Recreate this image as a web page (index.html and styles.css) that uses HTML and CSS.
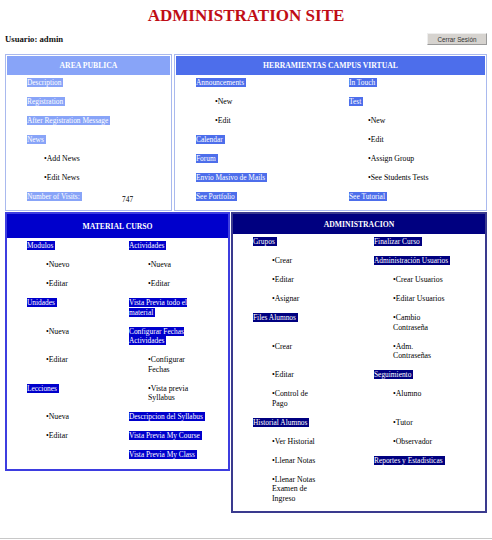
FILE: index.html
```html
<!DOCTYPE html>
<html>
<head>
<meta charset="utf-8">
<title>Administration Site</title>
<link rel="stylesheet" href="styles.css">
</head>
<body>
<div class="page">
  <h1 class="title">ADMINISTRATION SITE</h1>
  <div class="userbar">
    <span class="user">Usuario: admin</span>
    <button class="logout" type="button">Cerrar Sesión</button>
  </div>

  <div class="row top">
    <section class="box pub">
      <div class="head">AREA PUBLICA</div>
      <div class="body">
        <div class="cell"><span class="lbl">Description</span></div>
        <div class="cell"><span class="lbl">Registration</span></div>
        <div class="cell"><span class="lbl">After Registration Message</span></div>
        <div class="cell"><span class="lbl">News</span></div>
        <div class="cell item">•Add News</div>
        <div class="cell item">•Edit News</div>
        <div class="cell visits"><span><span class="lbl">Number of Visits:</span></span><span class="count">747</span></div>
      </div>
    </section>

    <section class="box tools">
      <div class="head">HERRAMIENTAS CAMPUS VIRTUAL</div>
      <div class="body">
        <div class="cell"><span class="lbl">Announcements</span></div>
        <div class="cell"><span class="lbl">In Touch</span></div>
        <div class="cell item">•New</div>
        <div class="cell"><span class="lbl">Test</span></div>
        <div class="cell item">•Edit</div>
        <div class="cell item">•New</div>
        <div class="cell"><span class="lbl">Calendar</span></div>
        <div class="cell item">•Edit</div>
        <div class="cell"><span class="lbl">Forum</span></div>
        <div class="cell item">•Assign Group</div>
        <div class="cell"><span class="lbl">Envio Masivo de Mails</span></div>
        <div class="cell item">•See Students Tests</div>
        <div class="cell"><span class="lbl">See Portfolio</span></div>
        <div class="cell"><span class="lbl">See Tutorial</span></div>
      </div>
    </section>
  </div>

  <div class="row bottom">
    <section class="box mat">
      <div class="head">MATERIAL CURSO</div>
      <div class="body">
        <div class="cell"><span class="lbl">Modulos</span></div>
        <div class="cell"><span class="lbl">Actividades</span></div>
        <div class="cell item">•Nuevo</div>
        <div class="cell item">•Nueva</div>
        <div class="cell item">•Editar</div>
        <div class="cell item">•Editar</div>
        <div class="cell"><span class="lbl">Unidades</span></div>
        <div class="cell"><span class="lbl">Vista Previa todo el<br>material</span></div>
        <div class="cell item">•Nueva</div>
        <div class="cell"><span class="lbl">Configurar Fechas<br>Actividades</span></div>
        <div class="cell item">•Editar</div>
        <div class="cell item">•Configurar<br>Fechas</div>
        <div class="cell"><span class="lbl">Lecciones</span></div>
        <div class="cell item">•Vista previa<br>Syllabus</div>
        <div class="cell item">•Nueva</div>
        <div class="cell"><span class="lbl">Descripcion del Syllabus</span></div>
        <div class="cell item">•Editar</div>
        <div class="cell"><span class="lbl">Vista Previa My Course</span></div>
        <div class="cell"></div>
        <div class="cell"><span class="lbl">Vista Previa My Class</span></div>
      </div>
    </section>

    <section class="box adm">
      <div class="head">ADMINISTRACION</div>
      <div class="body">
        <div class="cell"><span class="lbl">Grupos</span></div>
        <div class="cell"><span class="lbl">Finalizar Curso</span></div>
        <div class="cell item">•Crear</div>
        <div class="cell"><span class="lbl">Administración Usuarios</span></div>
        <div class="cell item">•Editar</div>
        <div class="cell item">•Crear Usuarios</div>
        <div class="cell item">•Asignar</div>
        <div class="cell item">•Editar Usuarios</div>
        <div class="cell"><span class="lbl">Files Alumnos</span></div>
        <div class="cell item">•Cambio<br>Contraseña</div>
        <div class="cell item">•Crear</div>
        <div class="cell item">•Adm.<br>Contraseñas</div>
        <div class="cell item">•Editar</div>
        <div class="cell"><span class="lbl">Seguimiento</span></div>
        <div class="cell item">•Control de<br>Pago</div>
        <div class="cell item">•Alumno</div>
        <div class="cell"><span class="lbl">Historial Alumnos</span></div>
        <div class="cell item">•Tutor</div>
        <div class="cell item">•Ver Historial</div>
        <div class="cell item">•Observador</div>
        <div class="cell item">•Llenar Notas</div>
        <div class="cell"><span class="lbl">Reportes y Estadisticas</span></div>
        <div class="cell item">•Llenar Notas<br>Examen de<br>Ingreso</div>
        <div class="cell"></div>
      </div>
    </section>
  </div>
</div>
</body>
</html>
```

FILE: styles.css
```css
* { box-sizing: border-box; }

body {
  margin: 0;
  background: #fff;
  color: #111;
  font-family: "Liberation Serif", "Times New Roman", serif;
}

.page {
  height: 539px;
  padding: 0 5px;
  border-bottom: 1px solid #c8c8c8;
}

.title {
  margin: 0;
  padding-top: 6px;
  font-size: 17px;
  line-height: 20px;
  font-weight: bold;
  text-align: center;
  color: #c00d16;
}

.userbar {
  display: flex;
  justify-content: space-between;
  align-items: center;
  height: 12px;
  margin-top: 7px;
}

.user {
  font-weight: bold;
  font-size: 8.7px;
}

.logout {
  width: 60px;
  height: 12px;
  padding: 0;
  font-family: "Liberation Sans", Arial, sans-serif;
  font-size: 6.3px;
  color: #333;
  background: #d6d3cf;
  border: 1px solid #9a9a9a;
  border-top-color: #eeeeee;
  border-left-color: #eeeeee;
}

.row {
  display: flex;
  align-items: flex-start;
}

.row.top { margin-top: 9px; gap: 2px; }
.row.bottom { margin-top: 1px; gap: 1px; }

.box { background: #fff; }

.head {
  display: flex;
  align-items: center;
  justify-content: center;
  color: #fff;
  font-weight: bold;
  font-size: 7.7px;
}

.body {
  display: grid;
  padding-left: 20px;
}

.cell {
  padding: 3px 0 6.5px;
  line-height: 9.5px;
  font-size: 7.4px;
  white-space: nowrap;
  color: #000;
}

.item {
  padding-left: 19px;
  font-size: 7.8px;
}

.lbl {
  color: #fff;
  padding-right: 2px;
}

/* AREA PUBLICA */
.pub {
  width: 167px;
  border: 1px solid #a9b9ee;
  padding: 1px;
}
.pub .head { height: 19px; background: #88a4f8; }
.pub .body { grid-template-columns: 1fr; padding-bottom: 1px; }
.pub .lbl { background: #88a4f8; }
.pub .item { padding-left: 17px; }

.visits {
  display: grid;
  grid-template-columns: 95px auto;
}
.count {
  padding-top: 6px;
  line-height: 3.5px;
}

/* HERRAMIENTAS */
.tools {
  flex: 1;
  border: 1px solid #a9b9ee;
  padding: 1px;
}
.tools .head { height: 19px; background: #4d6eeb; }
.tools .body { grid-template-columns: 153px 1fr; padding-bottom: 1px; }
.tools .lbl { background: #4d6eeb; }

/* MATERIAL CURSO */
.mat {
  width: 225px;
  border: 2px solid #3d3de0;
}
.mat .head { height: 24px; background: #0000cc; }
.mat .body { grid-template-columns: 102px 1fr; padding-bottom: 3px; }
.mat .lbl { background: #0000cc; }

/* ADMINISTRACION */
.adm {
  width: 256px;
  border: 2px solid #3a3a8e;
}
.adm .head { height: 20px; background: #000080; }
.adm .body { grid-template-columns: 121px 1fr; padding-bottom: 1px; }
.adm .lbl { background: #000080; }
```
